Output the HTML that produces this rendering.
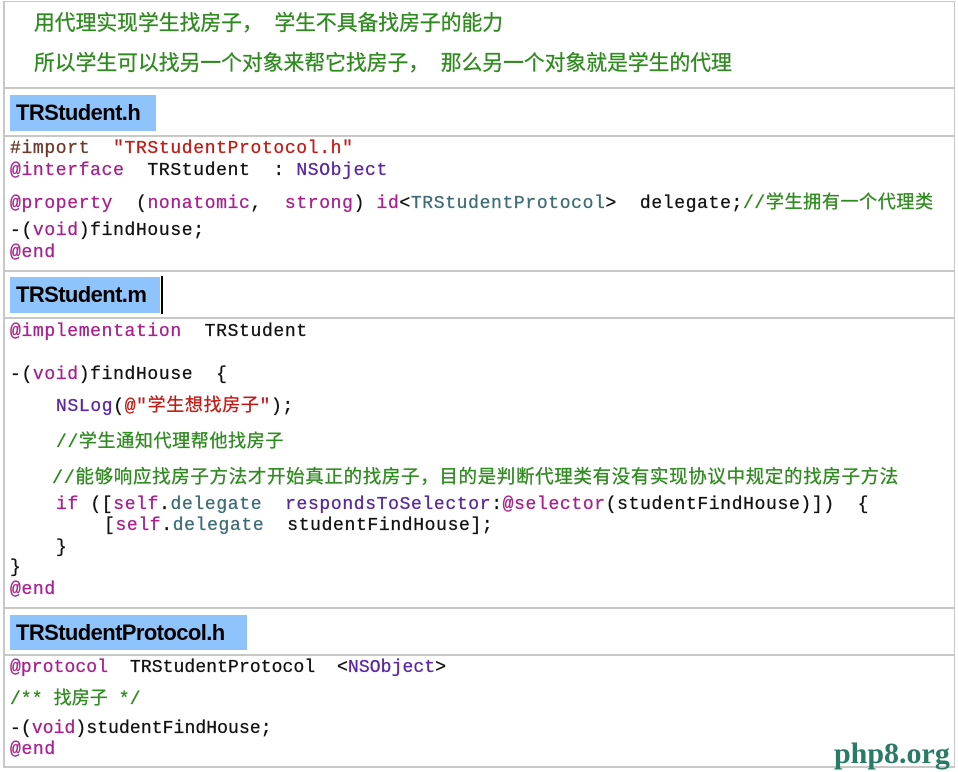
<!DOCTYPE html>
<html><head><meta charset="utf-8"><style>
html,body{margin:0;padding:0;background:#fff;width:958px;height:772px;overflow:hidden;position:relative}
.l{position:absolute;white-space:pre;font-family:"Liberation Mono","Noto Sans CJK SC",monospace;font-size:18px;line-height:22px;color:#111;letter-spacing:0.65px;-webkit-text-stroke:0.3px}
.cn{position:absolute;white-space:pre;font-family:"Liberation Sans","Noto Sans CJK SC",sans-serif;font-size:20.8px;line-height:24px;color:#2f8a1f;-webkit-text-stroke:0.3px}
.hr{position:absolute;left:3px;width:952px;height:2px;background:#c8c8c8}
.hd{position:absolute;left:10px;background:#8fc3fb;font-family:"Liberation Sans",sans-serif;font-weight:bold;font-size:22px;letter-spacing:-0.6px;color:#000;padding-left:6px;box-sizing:border-box;line-height:36px}
.k{color:#a8208f}.s{color:#c41a16}.c{color:#2f8a1f}.p{color:#5a27a0}.t{color:#3e6c76}.pp{color:#6b3a2a}
</style></head><body>
<div style="position:absolute;left:3px;top:1px;width:952px;height:767px;border:1px solid #c8c8c8;border-width:1px 1px 2px 2px;box-sizing:border-box"></div>
<div class="hr" style="top:87px"></div>
<div class="hr" style="top:135px"></div>
<div class="hr" style="top:270px"></div>
<div class="hr" style="top:317px"></div>
<div class="hr" style="top:607px"></div>
<div class="hr" style="top:654px"></div>

<div class="cn" style="left:34px;top:12px">用代理实现学生找房子，  学生不具备找房子的能力</div>
<div class="cn" style="left:34px;top:52px">所以学生可以找另一个对象来帮它找房子，  那么另一个对象就是学生的代理</div>

<div class="hd" style="top:95px;width:146px;height:36px">TRStudent.h</div>
<div class="l" style="left:10px;top:138px"><span class="pp">#import</span>  <span class="s">"TRStudentProtocol.h"</span></div>
<div class="l" style="left:10px;top:160px"><span class="k">@interface</span>  TRStudent  : <span class="p">NSObject</span></div>
<div class="l" style="left:10px;top:193px"><span class="k">@property</span>  (<span class="k">nonatomic</span>,  <span class="k">strong</span>) <span class="k">id</span>&lt;<span class="t">TRStudentProtocol</span>&gt;  delegate;<span class="c">//学生拥有一个代理类</span></div>
<div class="l" style="left:10px;top:220px">-(<span class="k">void</span>)findHouse;</div>
<div class="l" style="left:10px;top:242px"><span class="k">@end</span></div>

<div class="hd" style="top:277px;width:150px;height:36px">TRStudent.m</div>
<div style="position:absolute;left:161px;top:276px;width:2px;height:38px;background:#000"></div>
<div class="l" style="left:10px;top:321px"><span class="k">@implementation</span>  TRStudent</div>
<div class="l" style="left:10px;top:364px">-(<span class="k">void</span>)findHouse  {</div>
<div class="l" style="left:56px;top:396px"><span class="p">NSLog</span>(<span class="s">@"学生想找房子"</span>);</div>
<div class="l c" style="left:56px;top:432px">//学生通知代理帮他找房子</div>
<div class="l c" style="left:52px;top:468px;font-size:18.5px">//能够响应找房子方法才开始真正的找房子，目的是判断代理类有没有实现协议中规定的找房子方法</div>
<div class="l" style="left:56px;top:494px"><span class="k">if</span> ([<span class="k">self</span>.<span class="t">delegate</span>  <span class="p">respondsToSelector</span>:<span class="k">@selector</span>(studentFindHouse)])  {</div>
<div class="l" style="left:104px;top:515px">[<span class="k">self</span>.<span class="t">delegate</span>  studentFindHouse];</div>
<div class="l" style="left:56px;top:537px">}</div>
<div class="l" style="left:10px;top:557px">}</div>
<div class="l" style="left:10px;top:579px"><span class="k">@end</span></div>

<div class="hd" style="top:615px;width:237px;height:35px">TRStudentProtocol.h</div>
<div class="l" style="left:10px;top:657px;letter-spacing:0.1px"><span class="k">@protocol</span>  TRStudentProtocol  &lt;<span class="p">NSObject</span>&gt;</div>
<div class="l c" style="left:10px;top:689px;letter-spacing:0.1px">/** 找房子 */</div>
<div class="l" style="left:10px;top:718px;letter-spacing:0.1px">-(<span class="k">void</span>)studentFindHouse;</div>
<div class="l" style="left:10px;top:739px"><span class="k">@end</span></div>

<div style="position:absolute;left:834px;top:737px;font-family:'Liberation Serif',serif;font-weight:bold;font-size:30px;color:#2a7a68;line-height:34px">php8.org</div>
</body></html>
